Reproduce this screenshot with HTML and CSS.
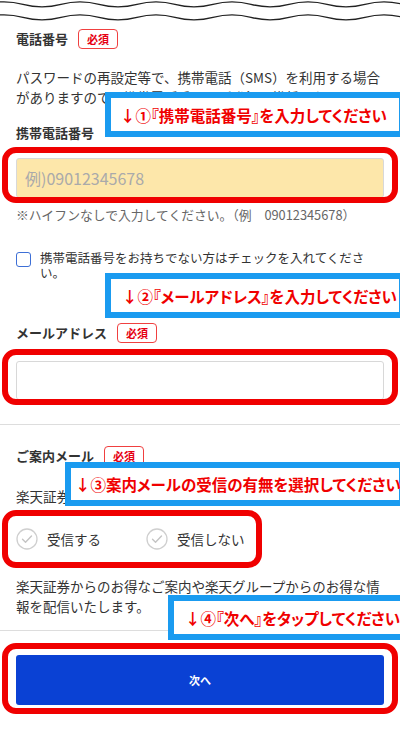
FILE: index.html
```html
<!DOCTYPE html>
<html lang="ja">
<head>
<meta charset="utf-8">
<link rel="stylesheet" href="styles.css">
</head>
<body>
<div class="page">
  <svg class="wave" width="400" height="22" viewBox="0 0 400 22">
    <path d="M-53 4.3 q19 5 38 0 t38 0 t38 0 t38 0 t38 0 t38 0 t38 0 t38 0 t38 0 t38 0 t38 0 t38 0 t38 0 t38 0" />
    <path d="M-53 17.3 q19 5 38 0 t38 0 t38 0 t38 0 t38 0 t38 0 t38 0 t38 0 t38 0 t38 0 t38 0 t38 0 t38 0 t38 0" />
  </svg>

  <section class="section section-phone">
    <div class="label-row">
      <span class="label">電話番号</span><span class="badge">必須</span>
    </div>
    <p class="text">パスワードの再設定等で、携帯電話（SMS）を利用する場合がありますので、携帯電話番号のご登録を推奨いたします。</p>
    <div class="label-row sub">
      <span class="label">携帯電話番号</span>
    </div>
    <div class="input input-yellow"><span class="placeholder">例)09012345678</span></div>
    <p class="hint">※ハイフンなしで入力してください。（例　09012345678）</p>
    <div class="check-row">
      <span class="checkbox"></span>
      <span class="check-text">携帯電話番号をお持ちでない方はチェックを入れてください。</span>
    </div>
    <div class="label-row mail">
      <span class="label">メールアドレス</span><span class="badge">必須</span>
    </div>
    <div class="input input-white"></div>
  </section>

  <section class="section section-guide">
    <div class="label-row">
      <span class="label">ご案内メール</span><span class="badge">必須</span>
    </div>
    <p class="text guide-q">楽天証券からのご案内メールの受信を選択してください。</p>
    <div class="radios">
      <div class="radio">
        <svg class="radio-icon" width="22" height="22" viewBox="0 0 22 22"><circle cx="11" cy="11" r="10" /><path d="M6.5 11.2 l3 3 l6 -6.2" /></svg>
        <span>受信する</span>
      </div>
      <div class="radio">
        <svg class="radio-icon" width="22" height="22" viewBox="0 0 22 22"><circle cx="11" cy="11" r="10" /><path d="M6.5 11.2 l3 3 l6 -6.2" /></svg>
        <span>受信しない</span>
      </div>
    </div>
    <p class="text guide-info">楽天証券からのお得なご案内や楽天グループからのお得な情報を配信いたします。</p>
  </section>

  <div class="button-wrap">
    <div class="button">次へ</div>
  </div>

  <div class="note note1">↓①『携帯電話番号』を入力してください</div>
  <div class="note note2">↓②『メールアドレス』を入力してください</div>
  <div class="note note3">↓③案内メールの受信の有無を選択してください</div>
  <div class="note note4">↓④『次へ』をタップしてください</div>

  <div class="ring ring1"></div>
  <div class="ring ring2"></div>
  <div class="ring ring3"></div>
  <div class="ring ring4"></div>
</div>
</body>
</html>
```

FILE: styles.css
```css
html, body {
  margin: 0;
  padding: 0;
  background: #fff;
}
body {
  font-family: "Noto Sans CJK JP", "Noto Sans", sans-serif;
  color: #333;
}
.page {
  position: relative;
  width: 400px;
  height: 737px;
  overflow: hidden;
  background: #fff;
}
.wave {
  display: block;
}
.wave path {
  fill: none;
  stroke: #222;
  stroke-width: 1.3;
}
.section {
  padding: 0 16px;
}
.section-phone {
  padding-top: 7px;
  padding-bottom: 24px;
  border-bottom: 1px solid #ddd;
}
.label-row {
  display: flex;
  align-items: center;
  gap: 10px;
  height: 20px;
}
.label {
  font-size: 13px;
  font-weight: bold;
  color: #333;
  line-height: 20px;
}
.badge {
  box-sizing: border-box;
  height: 20px;
  padding: 0 8px;
  border: 1px solid #f04040;
  border-radius: 4px;
  color: #e60012;
  font-size: 11px;
  font-weight: bold;
  line-height: 18px;
}
.text {
  margin: 18px 0 0;
  font-size: 13.5px;
  line-height: 20px;
  color: #333;
}
.label-row.sub {
  margin-top: 16px;
}
.input {
  box-sizing: border-box;
  height: 40px;
  margin-top: 15px;
  border: 1px solid #d8d8d8;
  border-radius: 3px;
  display: flex;
  align-items: center;
  padding-left: 8px;
}
.input-yellow {
  background: #fde7aa;
}
.input-white {
  background: #fff;
  height: 39px;
  margin-top: 18px;
}
.placeholder {
  font-size: 16px;
  color: #aaa;
}
.hint {
  margin: 9px 0 0;
  font-size: 12.8px;
  line-height: 16px;
  color: #666;
}
.check-row {
  display: flex;
  align-items: flex-start;
  gap: 9px;
  margin-top: 27px;
}
.checkbox {
  box-sizing: border-box;
  flex: none;
  width: 15px;
  height: 15px;
  margin-top: 2px;
  border: 1.5px solid #3d6fd6;
  border-radius: 3px;
  background: #fff;
}
.check-text {
  width: 330px;
  font-size: 12.5px;
  line-height: 15px;
  color: #333;
}
.label-row.mail {
  margin-top: 43px;
}
.section-guide {
  padding-top: 21px;
  padding-bottom: 14px;
  border-bottom: 1px solid #ddd;
}
.guide-q {
  margin-top: 20px;
}
.radios {
  display: flex;
  gap: 45px;
  margin-top: 22px;
}
.radio {
  display: flex;
  align-items: center;
  gap: 9px;
  font-size: 13.5px;
  color: #333;
  height: 22px;
}
.radio-icon circle {
  fill: #fff;
  stroke: #cfcfcf;
  stroke-width: 1.3;
}
.radio-icon path {
  fill: none;
  stroke: #c4c4c4;
  stroke-width: 1.4;
  stroke-linecap: round;
  stroke-linejoin: round;
}
.guide-info {
  margin-top: 26px;
}
.button-wrap {
  padding: 24px 16px 0;
}
.button {
  height: 50px;
  background: #0a41d4;
  border-radius: 3px;
  color: #fff;
  font-size: 11px;
  font-weight: bold;
  display: flex;
  align-items: center;
  justify-content: center;
}

/* overlay annotations */
.note {
  position: absolute;
  box-sizing: border-box;
  background: #fff;
  border: 6px solid #1a9bf0;
  color: #f00000;
  font-size: 15.5px;
  font-weight: bold;
  font-feature-settings: "palt";
  white-space: nowrap;
  display: flex;
  align-items: center;
  padding-left: 9px;
}
.note1 { left: 105px; top: 92px; width: 300px; height: 45px; }
.note2 { left: 105px; top: 273px; width: 300px; height: 45px; padding-left: 11px; }
.note3 { left: 65px; top: 462px; width: 340px; height: 44px; padding-left: 4px; }
.note4 { left: 168px; top: 595px; width: 240px; height: 45px; padding-left: 11px; }

.ring {
  position: absolute;
  box-sizing: border-box;
  border: 6px solid #f00000;
  border-radius: 14px;
}
.ring1 { left: 2px; top: 147px; width: 396px; height: 56px; }
.ring2 { left: 2px; top: 349px; width: 396px; height: 56px; }
.ring3 { left: 2px; top: 510px; width: 260px; height: 58px; }
.ring4 { left: 2px; top: 643px; width: 396px; height: 71px; }
```
